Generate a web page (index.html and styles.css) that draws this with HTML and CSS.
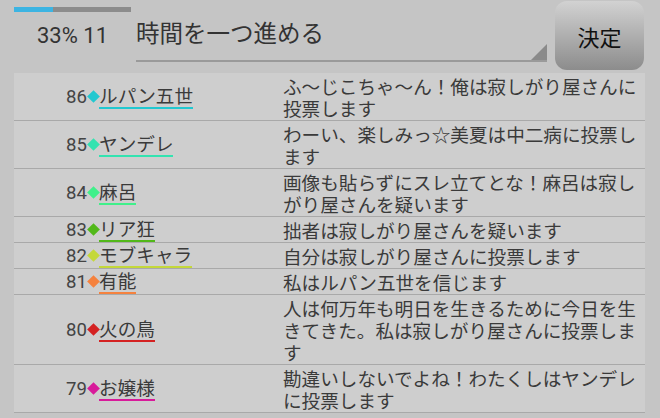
FILE: index.html
```html
<!DOCTYPE html>
<html lang="ja">
<head>
    <meta charset="UTF-8">
    <meta name="viewport" content="width=device-width, initial-scale=1.0">
    <title>投票</title>
    <link rel="stylesheet" href="styles.css">
</head>
<body>
    <div class="top">
        <div class="status">
            <div class="bar"><div class="bar-fill"></div></div>
            <div class="status-text">33% 11</div>
        </div>
        <div class="action">時間を一つ進める</div>
        <button class="decide">決定</button>
    </div>

    <div class="list">
        <div class="row">
            <div class="voter"><span class="num">86</span><i class="mark c86"></i><span class="name c86">ルパン五世</span></div>
            <div class="msg">ふ～じこちゃ～ん！俺は寂しがり屋さんに投票します</div>
        </div>
        <div class="row">
            <div class="voter"><span class="num">85</span><i class="mark c85"></i><span class="name c85">ヤンデレ</span></div>
            <div class="msg">わーい、楽しみっ☆美夏は中二病に投票します</div>
        </div>
        <div class="row">
            <div class="voter"><span class="num">84</span><i class="mark c84"></i><span class="name c84">麻呂</span></div>
            <div class="msg">画像も貼らずにスレ立てとな！麻呂は寂しがり屋さんを疑います</div>
        </div>
        <div class="row">
            <div class="voter"><span class="num">83</span><i class="mark c83"></i><span class="name c83">リア狂</span></div>
            <div class="msg">拙者は寂しがり屋さんを疑います</div>
        </div>
        <div class="row">
            <div class="voter"><span class="num">82</span><i class="mark c82"></i><span class="name c82">モブキャラ</span></div>
            <div class="msg">自分は寂しがり屋さんに投票します</div>
        </div>
        <div class="row">
            <div class="voter"><span class="num">81</span><i class="mark c81"></i><span class="name c81">有能</span></div>
            <div class="msg">私はルパン五世を信じます</div>
        </div>
        <div class="row">
            <div class="voter"><span class="num">80</span><i class="mark c80"></i><span class="name c80">火の鳥</span></div>
            <div class="msg">人は何万年も明日を生きるために今日を生きてきた。私は寂しがり屋さんに投票します</div>
        </div>
        <div class="row">
            <div class="voter"><span class="num">79</span><i class="mark c79"></i><span class="name c79">お嬢様</span></div>
            <div class="msg">勘違いしないでよね！わたくしはヤンデレに投票します</div>
        </div>
    </div>
</body>
</html>
```

FILE: styles.css
```css
body {
    margin: 0;
    background-color: #c5c5c5;
    color: #3a3a3a;
    font-family: "Noto Sans CJK JP", "Noto Sans", sans-serif;
    overflow: hidden;
}
.top {
    display: flex;
    height: 73px;
    padding: 0 16px 0 14px;
}
.status {
    width: 117px;
    padding-top: 7px;
}
.bar {
    height: 5px;
    background-color: #8c8c8c;
}
.bar-fill {
    width: 33%;
    height: 100%;
    background-color: #3cb4e2;
}
.status-text {
    margin-top: 10px;
    text-align: center;
    font-family: Roboto, sans-serif;
    font-size: 22px;
    line-height: 28px;
    color: #333;
}
.action {
    position: relative;
    flex: 1;
    margin: 0 8px 0 5px;
    height: 62px;
    border-bottom: 2px solid #9a9a9a;
    box-sizing: border-box;
    font-size: 23.5px;
    line-height: 64px;
    color: #333;
}
.action::after {
    content: "";
    position: absolute;
    right: 0;
    bottom: 0;
    border-left: 16px solid transparent;
    border-bottom: 16px solid #8a8a8a;
}
.decide {
    width: 89px;
    height: 69px;
    margin-top: 1px;
    padding: 0;
    border: none;
    border-radius: 12px;
    background: linear-gradient(#d2d2d2, #8c8c8c);
    font-family: "Noto Sans CJK JP", sans-serif;
    font-size: 22px;
    color: #111;
}
.list {
    margin: 0 15px 0 14px;
    background-color: #cecece;
}
.row {
    display: grid;
    grid-template-columns: 269px 1fr;
    border-bottom: 1px solid #a9a9a9;
}
.voter {
    display: flex;
    align-items: center;
    padding-left: 52px;
    font-size: 18.6px;
}
.num {
    font-family: Roboto, sans-serif;
    color: #444;
}
.mark {
    display: inline-block;
    width: 9px;
    height: 9px;
    margin: 0 1.6px;
    transform: rotate(45deg);
}
.name {
    line-height: 22px;
    padding-bottom: 1px;
    border-bottom: 2px solid;
    color: #3a3a3a;
}
.msg {
    padding: 2px 4px 1px 0;
    font-size: 18.6px;
    line-height: 22px;
}
.mark.c86 { background-color: #22c8d0; }
.mark.c85 { background-color: #33e3b0; }
.mark.c84 { background-color: #40f08a; }
.mark.c83 { background-color: #52b81a; }
.mark.c82 { background-color: #c4d83a; }
.mark.c81 { background-color: #f5823e; }
.mark.c80 { background-color: #d42222; }
.mark.c79 { background-color: #d81a9a; }
.name.c86 { border-color: #22c8d0; }
.name.c85 { border-color: #33e3b0; }
.name.c84 { border-color: #40f08a; }
.name.c83 { border-color: #52b81a; }
.name.c82 { border-color: #c4d83a; }
.name.c81 { border-color: #f5823e; }
.name.c80 { border-color: #d42222; }
.name.c79 { border-color: #d81a9a; }
```
